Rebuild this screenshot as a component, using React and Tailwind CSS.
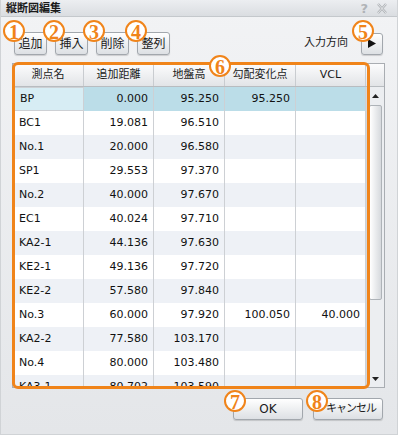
import React from "react";

const rows = [
	["BP", "0.000", "95.250", "95.250", ""],
	["BC1", "19.081", "96.510", "", ""],
	["No.1", "20.000", "96.580", "", ""],
	["SP1", "29.553", "97.370", "", ""],
	["No.2", "40.000", "97.670", "", ""],
	["EC1", "40.024", "97.710", "", ""],
	["KA2-1", "44.136", "97.630", "", ""],
	["KE2-1", "49.136", "97.720", "", ""],
	["KE2-2", "57.580", "97.840", "", ""],
	["No.3", "60.000", "97.920", "100.050", "40.000"],
	["KA2-2", "77.580", "103.170", "", ""],
	["No.4", "80.000", "103.480", "", ""],
	["KA3-1", "80.702", "103.590", "", ""],
];

const cols = ["測点名", "追加距離", "地盤高", "勾配変化点", "VCL"];
const widths = ["w-[71px]", "w-[70px]", "w-[71px]", "w-[71px]", "w-[70px]"];

const font = { fontFamily: '"DejaVu Sans","Noto Sans CJK JP",sans-serif' };

// 丸数字の注釈
const Marca = ({ n, className }) => (
	<div
		className={`absolute w-[22px] h-[22px] rounded-full border-2 border-[#f0841a] bg-white flex items-center justify-center text-[#f0841a] text-[20px] font-bold leading-none ${className}`}
		style={{ fontFamily: '"Liberation Serif",serif' }}
	>
		<span className="translate-y-[1px]">{n}</span>
	</div>
);

const Boton = ({ children, className }) => (
	<div
		className={`flex items-center justify-center border border-[#a2a7ad] rounded-[3px] bg-linear-to-b from-white to-[#dde0e4] shadow-[0_1px_1px_rgba(0,0,0,0.15)] text-[12px] text-[#1a1a1a] ${className}`}
	>
		{children}
	</div>
);

const App = () => {
	return (
		<div
			className="relative w-[398px] h-[435px] flex flex-col bg-linear-to-b from-[#f2f3f5] to-[#e4e6e9] border-l border-r border-b border-[#d0d3d6] overflow-hidden"
			style={font}
		>
			{/* barra de titulo */}
			<div className="h-[17px] flex items-center justify-between pl-[5px] pr-[9px] bg-linear-to-b from-[#eceef1] to-[#dadde1] border-b border-[#c4c8cc]">
				<span className="text-[11px] font-bold text-[#1a1a1a] leading-none">縦断図編集</span>
				<div className="flex items-center gap-[8px] text-[#b0b3b7]">
					<span className="text-[13px] font-bold leading-none">?</span>
					<svg width="12" height="11" viewBox="0 0 12 11">
						<path d="M2 1 L10 10 M10 1 L2 10" stroke="#b0b3b7" strokeWidth="2.4" fill="none" />
						<path d="M2 1 L10 10 M10 1 L2 10" stroke="#eef0f2" strokeWidth="0.8" fill="none" />
					</svg>
				</div>
			</div>

			{/* barra de herramientas */}
			<div className="mt-[15px] flex items-center pl-[13px] pr-[14px]">
				<div className="flex gap-[8px]">
					<Boton className="w-[33px] h-[23px]">追加</Boton>
					<Boton className="w-[33px] h-[23px]">挿入</Boton>
					<Boton className="w-[33px] h-[23px]">削除</Boton>
					<Boton className="w-[33px] h-[23px]">整列</Boton>
				</div>
				<span className="ml-auto mr-[13px] text-[11px] text-[#1a1a1a]">入力方向</span>
				<Boton className="w-[22px] h-[22px]">
					<svg width="8" height="9" viewBox="0 0 8 9">
						<path d="M0 0 L8 4.5 L0 9 Z" fill="#111" />
					</svg>
				</Boton>
			</div>

			{/* tabla */}
			<div className="mt-[8px] ml-[11px] w-[373px] h-[325px] border border-[#a9adb2] bg-white flex flex-col">
				<div className="flex h-[23px] bg-linear-to-b from-[#fcfcfd] to-[#e2e4e7] border-b border-[#b8bcc0]">
					{cols.map((c, i) => (
						<div
							key={c}
							className={`${widths[i]} flex items-center justify-center border-r border-[#c9ccd0] text-[11px] text-[#1a1a1a]`}
						>
							{c}
						</div>
					))}
					<div className="flex-1" />
				</div>
				<div className="flex flex-1 overflow-hidden">
					<div className="w-[353px] overflow-hidden">
						{rows.map((r, ri) => (
							<div
								key={ri}
								className={`flex h-[24px] ${ri === 0 ? "bg-[#bbdde8]" : ri % 2 === 0 ? "bg-[#eef1f6]" : "bg-white"}`}
							>
								{r.map((v, ci) => (
									<div
										key={ci}
										className={`${widths[ci]} shrink-0 flex items-center text-[11px] text-[#111] border-r border-[#cdd0d4] ${
											ci === 0 ? "justify-start pl-[6px]" : "justify-end pr-[5px]"
										} ${ri === 0 && ci === 0 ? "bg-[#d7edf4] border border-[#7cc2d4]" : ""}`}
									>
										{v}
									</div>
								))}
							</div>
						))}
					</div>
					{/* barra de desplazamiento */}
					<div className="flex-1 flex flex-col items-center bg-[#eceef1] border-l border-[#d4d7da]">
						<div className="h-[18px] flex items-center justify-center">
							<svg width="7" height="4" viewBox="0 0 7 4">
								<path d="M0 4 L3.5 0 L7 4 Z" fill="#222" />
							</svg>
						</div>
						<div className="w-[13px] h-[195px] rounded-[2px] border border-[#aeb3b8] bg-linear-to-r from-white to-[#d6d9dd]" />
						<div className="mt-auto h-[16px] flex items-center justify-center">
							<svg width="7" height="4" viewBox="0 0 7 4">
								<path d="M0 0 L7 0 L3.5 4 Z" fill="#222" />
							</svg>
						</div>
					</div>
				</div>
			</div>

			{/* botones inferiores */}
			<div className="mt-[10px] flex justify-end gap-[10px] pr-[14px]">
				<Boton className="w-[70px] h-[22px]">OK</Boton>
				<Boton className="w-[70px] h-[22px] pl-[6px]">
					<span className="text-[11px] tracking-[-1px]">キャンセル</span>
				</Boton>
			</div>

			{/* anotaciones */}
			<div className="absolute left-[11px] top-[62px] w-[358px] h-[327px] border-[3px] border-[#f0841a] rounded-[6px] pointer-events-none" />
			<Marca n="1" className="left-[2px] top-[20px]" />
			<Marca n="2" className="left-[42px] top-[20px]" />
			<Marca n="3" className="left-[82px] top-[20px]" />
			<Marca n="4" className="left-[124px] top-[20px]" />
			<Marca n="5" className="left-[351px] top-[20px]" />
			<Marca n="6" className="left-[208px] top-[55px]" />
			<Marca n="7" className="left-[223px] top-[390px]" />
			<Marca n="8" className="left-[305px] top-[390px]" />
		</div>
	);
};

export default App;
